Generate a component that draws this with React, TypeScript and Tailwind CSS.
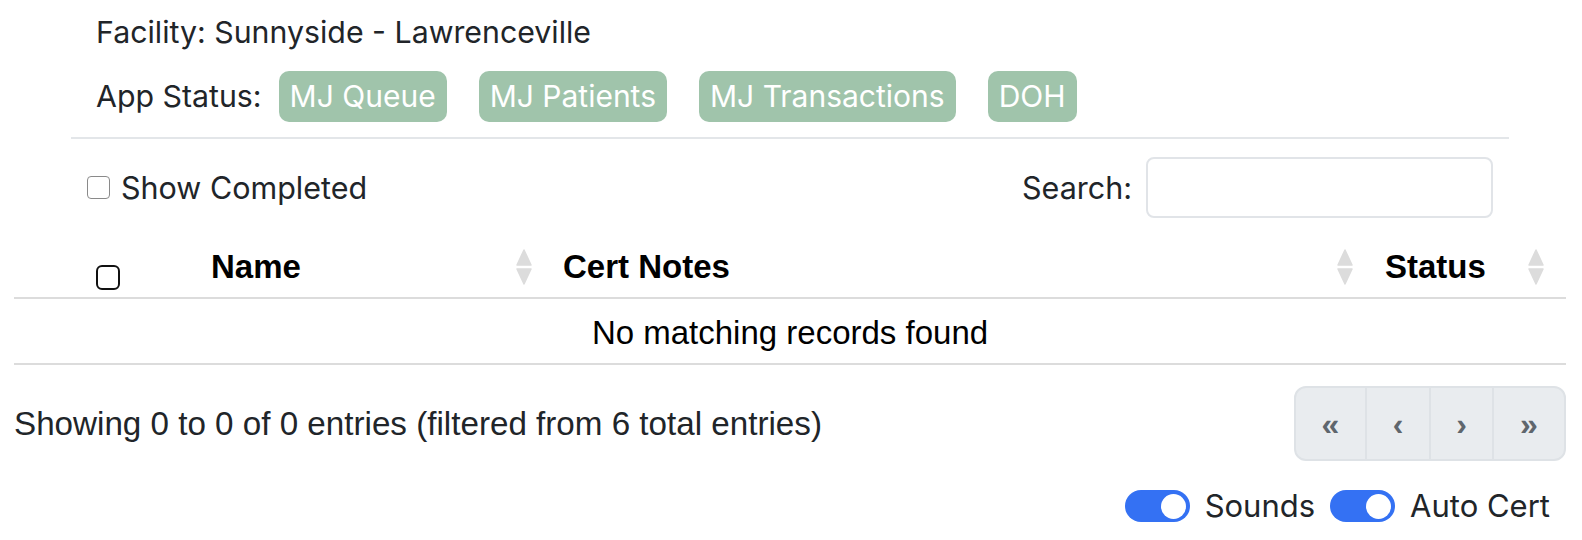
import { useState } from 'react';

const badges = ['MJ Queue', 'MJ Patients', 'MJ Transactions', 'DOH'];

function SortArrows() {
  return (
    <svg width="16" height="36" viewBox="0 0 16 36" className="shrink-0">
      <path d="M8 1 L15 16 L1 16 Z" fill="#dcdcdc" stroke="#dcdcdc" strokeWidth="1.5" strokeLinejoin="round" />
      <path d="M1 20 L15 20 L8 35 Z" fill="#dcdcdc" stroke="#dcdcdc" strokeWidth="1.5" strokeLinejoin="round" />
    </svg>
  );
}

function Toggle({ on, onClick }: { on: boolean; onClick: () => void }) {
  return (
    <button
      onClick={onClick}
      className={`flex h-[32px] w-[65px] items-center rounded-full px-[4px] ${
        on ? 'justify-end bg-[#3471f3]' : 'justify-start bg-[#d0d4d9]'
      }`}
    >
      <span className="h-[25px] w-[25px] rounded-full bg-white" />
    </button>
  );
}

export default function App() {
  const [sounds, setSounds] = useState(true);
  const [autoCert, setAutoCert] = useState(true);
  const [search, setSearch] = useState('');

  return (
    <div className="min-h-screen bg-white text-[#212529] font-['Inter','Liberation_Sans',sans-serif]">
      {/* Header */}
      <div className="ml-[71px] w-[1438px]">
        <div className="pl-[25px] pt-[8px] text-[30.3px] leading-[48px]">Facility: Sunnyside - Lawrenceville</div>
        <div className="mt-[15px] flex h-[51px] items-center pl-[25px] text-[30.3px]">
          <span className="mr-[17px]">App Status:</span>
          <div className="flex gap-[32px]">
            {badges.map((b) => (
              <span key={b} className="flex h-[51px] items-center rounded-[10px] bg-[#a0c4ab] px-[11px] text-[30px] text-white">
                {b}
              </span>
            ))}
          </div>
        </div>
        <div className="mt-[15px] h-[2px] bg-[#e3e6e9]" />
        <div className="mt-[18px] flex h-[61px] items-center justify-between px-[16px] text-[30.5px]">
          <label className="flex items-center gap-[11px]">
            <span className="h-[23px] w-[23px] rounded-[4px] border-[1.5px] border-[#8a8a8a] bg-white" />
            Show Completed
          </label>
          <label className="flex items-center gap-[14px]">
            Search:
            <input
              value={search}
              onChange={(e) => setSearch(e.target.value)}
              className="h-[61px] w-[347px] rounded-[8px] border-2 border-[#e1e4e8] outline-none"
            />
          </label>
        </div>
      </div>

      {/* Table */}
      <div className="ml-[14px] mr-[16px] font-['Liberation_Sans',Arial,sans-serif]">
        <div className="mt-[22px] grid h-[59px] grid-cols-[188px_343px_821px_1fr] border-b-2 border-[#dcdcdc] text-[33px] font-bold text-black">
          <div className="flex items-end justify-center pb-[7px]">
            <span className="h-[25px] w-[24px] rounded-[6px] border-2 border-[#111] bg-white" />
          </div>
          <div className="flex items-center justify-between pb-[3px] pl-[9px] pr-[13px]">
            Name
            <SortArrows />
          </div>
          <div className="flex items-center justify-between pb-[3px] pl-[18px] pr-[13px]">
            Cert Notes
            <SortArrows />
          </div>
          <div className="flex items-center justify-between pb-[3px] pl-[19px] pr-[22px]">
            Status
            <SortArrows />
          </div>
        </div>
        <div className="flex h-[66px] items-center justify-center border-b-2 border-[#dcdcdc] pt-[3px] text-[33px] text-black">
          No matching records found
        </div>

        {/* Footer */}
        <div className="mt-[21px] flex items-center justify-between">
          <div className="text-[33.2px] text-[#212529]">Showing 0 to 0 of 0 entries (filtered from 6 total entries)</div>
          <div className="flex h-[75px] overflow-hidden rounded-[12px] border-2 border-[#dee2e6] bg-[#e9ecef] text-[32px] font-semibold text-[#5f666d]">
            <button className="w-[71px] border-r-2 border-[#dee2e6]">«</button>
            <button className="w-[64px] border-r-2 border-[#dee2e6]">‹</button>
            <button className="w-[63px] border-r-2 border-[#dee2e6]">›</button>
            <button className="w-[70px]">»</button>
          </div>
        </div>

        {/* Toggles */}
        <div className="mt-[29px] flex h-[32px] items-center justify-end gap-[15px] pr-[16px] font-['Inter','Liberation_Sans',sans-serif] text-[31px]">
          <Toggle on={sounds} onClick={() => setSounds(!sounds)} />
          <span>Sounds</span>
          <Toggle on={autoCert} onClick={() => setAutoCert(!autoCert)} />
          <span>Auto Cert</span>
        </div>
      </div>
    </div>
  );
}
